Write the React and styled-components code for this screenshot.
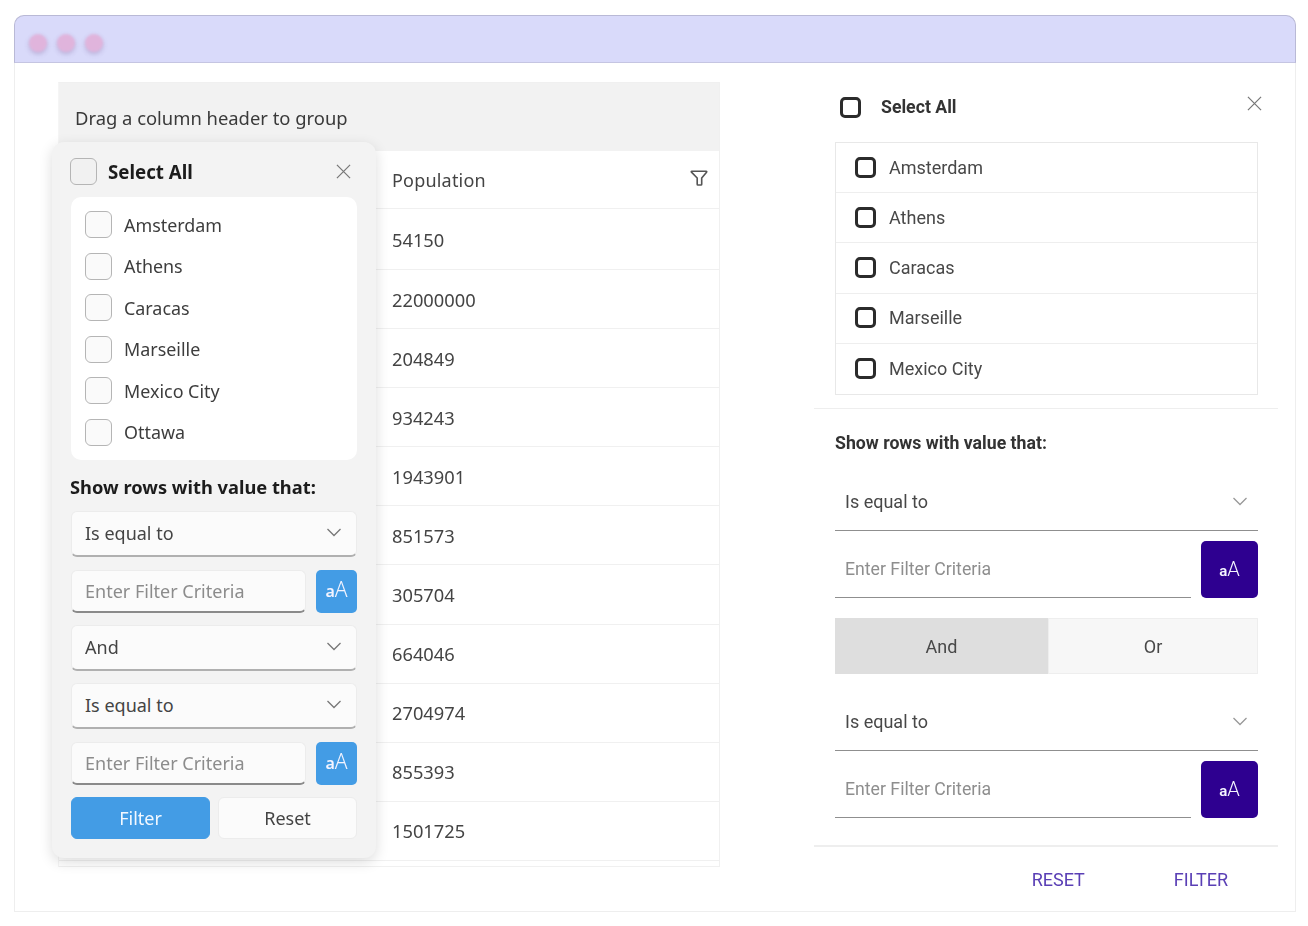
import React from "react";
import styled, { createGlobalStyle } from "styled-components";

const GlobalStyle = createGlobalStyle`
  html, body {
    margin: 0;
    padding: 0;
    background: #fff;
  }
  body {
    font-family: "Noto Sans", "Open Sans", sans-serif;
    color: #333;
  }
`;

const Page = styled.div`
  width: 1308px;
  height: 926px;
  padding: 15px 12px 15px 14px;
  box-sizing: border-box;
  filter: blur(0.55px);
`;

const Window = styled.div`
  height: 897px;
  box-sizing: border-box;
  border: 1px solid #eeeeee;
  border-top: none;
  border-radius: 10px 10px 0 0;
  display: flex;
  flex-direction: column;
`;

const TitleBar = styled.div`
  height: 48px;
  margin: 0 -1px;
  flex: none;
  box-sizing: border-box;
  background: #d9dafa;
  border: 1px solid #b9b9d6;
  border-bottom: 1px solid #c5c5e2;
  border-radius: 10px 10px 0 0;
  display: flex;
  align-items: center;
  gap: 10px;
  padding: 8px 0 0 14px;
`;

const Dot = styled.span`
  width: 18px;
  height: 18px;
  border-radius: 50%;
  background: #e0b4dc;
  box-shadow: 0 2px 4px rgba(120, 90, 150, 0.35);
  filter: blur(1.2px);
`;

const Content = styled.div`
  flex: 1;
  display: flex;
  align-items: flex-start;
  padding: 19px 0 0 43px;
`;

const Grid = styled.div`
  position: relative;
  width: 662px;
  height: 785px;
  flex: none;
  box-sizing: border-box;
  border: 1px solid #f0f0f0;
  border-left-color: #f5f5f5;
`;

const GroupBar = styled.div`
  height: 68px;
  box-sizing: border-box;
  background: #f2f2f2;
  padding: 21px 0 0 16px;
  font-size: 18.4px;
  line-height: 28px;
  color: #3a3a3a;
`;

const HeaderRow = styled.div`
  height: 58px;
  box-sizing: border-box;
  border-bottom: 1px solid #f0f0f0;
  display: flex;
  align-items: center;
  justify-content: space-between;
  padding: 0 11px 0 333px;
  font-size: 18px;
  letter-spacing: 0.2px;
  color: #444;
`;

const Row = styled.div`
  height: ${(p) => (p.$first ? 61 : 59.1)}px;
  box-sizing: border-box;
  border-bottom: 1px solid #f0f0f0;
  padding-left: 333px;
  display: flex;
  align-items: center;
  font-size: 18.3px;
  color: #444;
`;

/* fluent style filter popup, sits over the grid */
const FluentPopup = styled.div`
  position: absolute;
  left: -7px;
  top: 59px;
  width: 324px;
  height: 716px;
  box-sizing: border-box;
  background: #f3f3f3;
  border-radius: 12px;
  box-shadow: 0 4px 14px rgba(0, 0, 0, 0.14);
  padding: 16px 19px 0 18px;
  display: flex;
  flex-direction: column;
`;

const FluentHead = styled.div`
  display: flex;
  align-items: center;
  gap: 11px;
  height: 27px;
  font-size: 18.7px;
  font-weight: 700;
  color: #1c1c1c;
`;

const FluentBox = styled.span`
  width: 27px;
  height: 27px;
  flex: none;
  box-sizing: border-box;
  border: 1.5px solid #b5b5b5;
  border-radius: 6px;
  background: ${(p) => (p.$head ? "#f1f1f1" : "#fafafa")};
`;

const CloseBtn = styled.span`
  margin-left: auto;
  display: flex;
  color: #777;
  margin-right: ${(p) => p.$right || 0}px;
  margin-top: ${(p) => p.$top || 0}px;
`;

const FluentList = styled.div`
  margin: 12px 0 0 1px;
  height: 263px;
  box-sizing: border-box;
  background: #fff;
  border-radius: 10px;
  padding: 14px 14px;
  display: flex;
  flex-direction: column;
  gap: 14.5px;
`;

const FluentItem = styled.div`
  display: flex;
  align-items: center;
  gap: 12px;
  height: 27px;
  font-size: 17.9px;
  color: #3d3d3d;
`;

const FluentLabel = styled.div`
  margin-top: 14px;
  height: 26px;
  line-height: 26px;
  font-size: 18.3px;
  font-weight: 700;
  color: #1c1c1c;
`;

const FluentSelect = styled.div`
  margin: ${(p) => p.$mt}px 0 0 1px;
  height: 46px;
  box-sizing: border-box;
  background: #fbfbfb;
  border: 1px solid #ececec;
  border-bottom: 2px solid #b0b0b0;
  border-radius: 6px;
  padding: 0 14px 2px 13px;
  display: flex;
  align-items: center;
  justify-content: space-between;
  font-size: 18px;
  color: #444;
`;

const FluentFilterRow = styled.div`
  margin: 13px 0 0 1px;
  display: flex;
  gap: 10px;
  height: 43px;
`;

const FluentInput = styled.div`
  flex: 1;
  box-sizing: border-box;
  background: #fbfbfb;
  border: 1px solid #ececec;
  border-bottom: 2px solid #8a8a8a;
  border-radius: 6px;
  padding: 0 0 0 13px;
  display: flex;
  align-items: center;
  font-size: 18px;
  color: #8c8c8c;
`;

const CaseBtn = styled.div`
  flex: none;
  width: ${(p) => p.$size}px;
  background: ${(p) => p.$bg};
  border-radius: ${(p) => p.$radius}px;
  color: #f4f4ff;
  display: flex;
  align-items: baseline;
  justify-content: center;
  line-height: ${(p) => p.$line}px;
  font-size: ${(p) => p.$big}px;
  font-weight: 300;

  small {
    font-size: ${(p) => p.$big - 5}px;
    font-weight: 600;
  }
`;

const FluentActions = styled.div`
  margin: 12px 0 0 1px;
  display: grid;
  grid-template-columns: 139px 139px;
  gap: 8px;
`;

const FluentBtn = styled.div`
  height: 42px;
  box-sizing: border-box;
  border-radius: 6px;
  display: flex;
  align-items: center;
  justify-content: center;
  font-size: 18px;
  color: ${(p) => (p.$primary ? "#f2f8ff" : "#444")};
  background: ${(p) => (p.$primary ? "#439ce5" : "#fbfbfb")};
  border: 1px solid ${(p) => (p.$primary ? "#439ce5" : "#ececec")};
`;

/* material style panel on the right */
const MaterialPanel = styled.div`
  width: 464px;
  flex: none;
  margin-left: 94px;
  padding-top: 10px;
  font-family: Roboto, "Noto Sans", sans-serif;
  color: #3a3a3a;
`;

const MaterialHead = styled.div`
  height: 30px;
  margin-left: 26px;
  margin-right: 16px;
  display: flex;
  align-items: center;
  gap: 20px;
  font-size: 17.7px;
  font-weight: 700;
  color: #333;
`;

const MaterialBox = styled.span`
  width: 21px;
  height: 21px;
  flex: none;
  box-sizing: border-box;
  border: 3px solid #2b2b2b;
  border-radius: 5px;
`;

const MaterialList = styled.div`
  margin: 20px 20px 0 21px;
  border: 1px solid #e8e8e8;
`;

const MaterialItem = styled.div`
  height: 50.2px;
  box-sizing: border-box;
  padding: 0 0 1px 19px;
  display: flex;
  align-items: center;
  gap: 13px;
  font-size: 18px;
  color: #484848;
  border-bottom: 1.5px solid #eeeeee;

  &:last-child {
    border-bottom: none;
  }
`;

const Divider = styled.div`
  margin-top: ${(p) => p.$mt}px;
  height: 1.5px;
  background: #eeeeee;
`;

const MaterialSection = styled.div`
  padding: 0 20px 0 21px;
  display: flex;
  flex-direction: column;
`;

const MaterialLabel = styled.div`
  margin-top: 23px;
  height: 22px;
  line-height: 22px;
  font-size: 17.7px;
  font-weight: 700;
  color: #333;
`;

const MaterialSelect = styled.div`
  margin-top: ${(p) => p.$mt}px;
  height: 56px;
  box-sizing: border-box;
  border-bottom: 1.5px solid #8f8f8f;
  padding: 0 10px 2px 10px;
  display: flex;
  align-items: center;
  justify-content: space-between;
  font-size: 18px;
  color: #484848;
`;

const MaterialFilterRow = styled.div`
  margin-top: 10px;
  height: 57px;
  display: flex;
  gap: 10px;
`;

const MaterialInput = styled.div`
  flex: 1;
  box-sizing: border-box;
  border-bottom: 1.5px solid #8f8f8f;
  padding: 0 0 1px 10px;
  display: flex;
  align-items: center;
  font-size: 17.7px;
  color: #8e8e8e;
`;

const Toggle = styled.div`
  margin-top: 20px;
  height: 56px;
  display: grid;
  grid-template-columns: 213px 210px;
`;

const ToggleItem = styled.div`
  display: flex;
  align-items: center;
  justify-content: center;
  font-size: 18px;
  color: #484848;
  background: ${(p) => (p.$active ? "#dedede" : "#f7f7f7")};
  border: 1px solid ${(p) => (p.$active ? "#dedede" : "#eeeeee")};
  box-sizing: border-box;
`;

const MaterialActions = styled.div`
  height: 66px;
  display: flex;
  align-items: center;
  justify-content: flex-end;
  gap: 89px;
  padding: 0 50px 0 0;
  font-size: 18px;
  color: #5a3fb5;
`;

const FunnelSvg = styled.svg`
  margin-top: -4px;
`;

const cities = ["Amsterdam", "Athens", "Caracas", "Marseille", "Mexico City", "Ottawa"];
const population = ["54150", "22000000", "204849", "934243", "1943901", "851573", "305704", "664046", "2704974", "855393", "1501725"];

const CloseIcon = ({ size }) => (
  <svg width={size} height={size} viewBox="0 0 16 16" fill="none" stroke="currentColor" strokeWidth="1.3">
    <path d="M1 1l14 14M15 1L1 15" />
  </svg>
);

const Chevron = ({ color }) => (
  <svg width="16" height="9" viewBox="0 0 16 9" fill="none" stroke={color} strokeWidth="1.3">
    <path d="M1.5 1l6.5 6.5L14.5 1" />
  </svg>
);

const FunnelIcon = () => (
  <FunnelSvg width="18" height="18" viewBox="0 0 20 20" fill="none" stroke="#555" strokeWidth="1.8" strokeLinejoin="round">
    <path d="M2 2.5h16c.6 0 .8.6.4 1L13 10v7c0 .5-.3.8-.8.8H8.8c-.5 0-.8-.3-.8-.8v-7L1.6 3.5c-.4-.4-.2-1 .4-1z" />
  </FunnelSvg>
);

const CaseToggle = ({ bg, size, radius, big, line }) => (
  <CaseBtn $bg={bg} $size={size} $radius={radius} $big={big} $line={line}>
    <small>a</small>A
  </CaseBtn>
);

export default function App() {
  return (
    <Page>
      <GlobalStyle />
      <Window>
        <TitleBar>
          <Dot />
          <Dot />
          <Dot />
        </TitleBar>
        <Content>
          <Grid>
            <GroupBar>Drag a column header to group</GroupBar>
            <HeaderRow>
              <span>Population</span>
              <FunnelIcon />
            </HeaderRow>
            {population.map((value, i) => (
              <Row key={value} $first={i === 0}>{value}</Row>
            ))}
            <FluentPopup>
              <FluentHead>
                <FluentBox $head />
                Select All
                <CloseBtn $right={6}>
                  <CloseIcon size={15} />
                </CloseBtn>
              </FluentHead>
              <FluentList>
                {cities.map((city) => (
                  <FluentItem key={city}>
                    <FluentBox />
                    {city}
                  </FluentItem>
                ))}
              </FluentList>
              <FluentLabel>Show rows with value that:</FluentLabel>
              <FluentSelect $mt={11}>
                Is equal to
                <Chevron color="#777" />
              </FluentSelect>
              <FluentFilterRow>
                <FluentInput>Enter Filter Criteria</FluentInput>
                <CaseToggle bg="#439ce5" size={41} radius={5} big={21} line={38} />
              </FluentFilterRow>
              <FluentSelect $mt={12}>
                And
                <Chevron color="#777" />
              </FluentSelect>
              <FluentSelect $mt={12}>
                Is equal to
                <Chevron color="#777" />
              </FluentSelect>
              <FluentFilterRow>
                <FluentInput>Enter Filter Criteria</FluentInput>
                <CaseToggle bg="#439ce5" size={41} radius={5} big={21} line={38} />
              </FluentFilterRow>
              <FluentActions>
                <FluentBtn $primary>Filter</FluentBtn>
                <FluentBtn>Reset</FluentBtn>
              </FluentActions>
            </FluentPopup>
          </Grid>
          <MaterialPanel>
            <MaterialHead>
              <MaterialBox />
              Select All
              <CloseBtn $top={-8}>
                <CloseIcon size={15} />
              </CloseBtn>
            </MaterialHead>
            <MaterialList>
              {cities.slice(0, 5).map((city) => (
                <MaterialItem key={city}>
                  <MaterialBox />
                  {city}
                </MaterialItem>
              ))}
            </MaterialList>
            <Divider $mt={13} />
            <MaterialSection>
              <MaterialLabel>Show rows with value that:</MaterialLabel>
              <MaterialSelect $mt={21}>
                Is equal to
                <Chevron color="#999" />
              </MaterialSelect>
              <MaterialFilterRow>
                <MaterialInput>Enter Filter Criteria</MaterialInput>
                <CaseToggle bg="#2e0090" size={57} radius={5} big={20} line={57} />
              </MaterialFilterRow>
              <Toggle>
                <ToggleItem $active>And</ToggleItem>
                <ToggleItem>Or</ToggleItem>
              </Toggle>
              <MaterialSelect $mt={21}>
                Is equal to
                <Chevron color="#999" />
              </MaterialSelect>
              <MaterialFilterRow>
                <MaterialInput>Enter Filter Criteria</MaterialInput>
                <CaseToggle bg="#2e0090" size={57} radius={5} big={20} line={57} />
              </MaterialFilterRow>
            </MaterialSection>
            <Divider $mt={27} />
            <MaterialActions>
              <span>RESET</span>
              <span>FILTER</span>
            </MaterialActions>
          </MaterialPanel>
        </Content>
      </Window>
    </Page>
  );
}
